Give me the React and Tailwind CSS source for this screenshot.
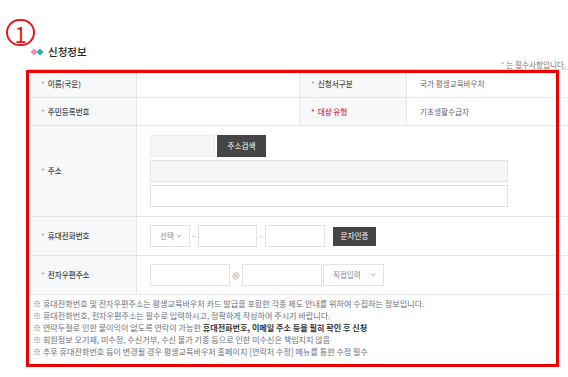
import { ChevronDown } from 'lucide-react'

const font = { fontFamily: '"Noto Sans CJK KR", "Noto Sans", sans-serif' }

function Label({ children, red }) {
  return (
    <div
      className={`flex w-[107px] shrink-0 items-center whitespace-nowrap border-r border-[#e6e6e6] bg-[#f7f8fa] pl-[11px] text-[7.6px] font-medium ${
        red ? 'text-[#e0302b]' : 'text-[#444]'
      }`}
    >
      <span className={`mr-[3px] ${red ? 'text-[#e0302b]' : 'text-[#aaa]'}`}>*</span>
      {children}
    </div>
  )
}

function Select({ text, className }) {
  return (
    <div
      className={`flex h-[22px] items-center justify-between whitespace-nowrap border border-[#e3e3e3] bg-white pl-[9px] pr-[6px] text-[7.5px] text-[#888] ${className}`}
    >
      <span>{text}</span>
      <ChevronDown size={8} strokeWidth={2} className="shrink-0 text-[#888]" />
    </div>
  )
}

function Input({ className }) {
  return <div className={`h-[22px] border border-[#e3e3e3] bg-white ${className}`} />
}

export default function App() {
  return (
    <div className="relative h-[377px] w-[568px] overflow-hidden bg-white" style={font}>
      <div className="ml-[6px] pt-[19px]">
        <div className="flex h-[27px] w-[29px] items-center justify-center rounded-full border-2 border-[#e3191b] text-[22px] leading-none text-[#e3191b]">
          1
        </div>
      </div>

      <div className="ml-[30px] mt-[-1px] flex h-[13px] items-center">
        <svg width="15" height="8" viewBox="0 0 15 8" className="mr-[3px]">
          <rect x="1.5" y="1.5" width="5" height="5" transform="rotate(45 4 4)" fill="#ec8fb8" />
          <rect x="7.5" y="1.5" width="5" height="5" transform="rotate(45 10 4)" fill="#1fb3b0" />
        </svg>
        <span className="text-[10.5px] font-medium text-[#222]">신청정보</span>
      </div>

      <div className="mr-[2px] mt-[2px] whitespace-nowrap text-right text-[7.6px] leading-[10px] text-[#777]">
        <span className="text-[#aaa]">*</span> 는 필수사항입니다.
      </div>

      <div className="ml-[30px] mt-[-1px] w-[545px] border-t border-[#d8d8d8]">
        <div className="flex h-[28px] border-b border-[#e6e6e6]">
          <Label>이름(국문)</Label>
          <div className="w-[163px] shrink-0 border-r border-[#e6e6e6]" />
          <Label>신청서구분</Label>
          <div className="flex items-center pl-[13px] text-[7.6px] text-[#666]">국가 평생교육바우처</div>
        </div>
        <div className="flex h-[28px] border-b border-[#e6e6e6]">
          <Label>주민등록번호</Label>
          <div className="w-[163px] shrink-0 border-r border-[#e6e6e6]" />
          <Label red>대상 유형</Label>
          <div className="flex items-center pl-[13px] text-[7.6px] text-[#666]">기초생활수급자</div>
        </div>

        <div className="flex h-[91px] border-b border-[#e6e6e6]">
          <Label>주소</Label>
          <div className="flex flex-col gap-[3px] pl-[13px] pt-[9px]">
            <div className="flex items-center gap-[2px]">
              <div className="h-[22px] w-[65px] border border-[#ebebeb] bg-[#f5f6f8]" />
              <div className="flex h-[22px] w-[49px] items-center justify-center bg-[#454545] text-[7.6px] text-white">
                주소검색
              </div>
            </div>
            <div className="h-[22px] w-[358px] border border-[#e3e3e3] bg-[#f5f6f8]" />
            <div className="h-[22px] w-[358px] border border-[#e3e3e3] bg-white" />
          </div>
        </div>

        <div className="flex h-[39px] border-b border-[#e6e6e6]">
          <Label>휴대전화번호</Label>
          <div className="flex items-center pl-[13px] text-[7.5px] text-[#888]">
            <Select text="선택" className="w-[40px]" />
            <span className="w-[8px] text-center">-</span>
            <Input className="w-[59px]" />
            <span className="w-[8px] text-center">-</span>
            <Input className="w-[60px]" />
            <div className="ml-[8px] flex h-[19px] w-[43px] items-center justify-center bg-[#454545] text-[7.6px] text-white">
              문자인증
            </div>
          </div>
        </div>

        <div className="flex h-[39px] border-b border-[#e6e6e6]">
          <Label>전자우편주소</Label>
          <div className="flex items-center pl-[13px] text-[7.5px] text-[#999]">
            <Input className="w-[80px]" />
            <span className="w-[12px] text-center">@</span>
            <Input className="w-[80px]" />
            <Select text="직접입력" className="ml-[1px] w-[61px]" />
          </div>
        </div>

        <div className="whitespace-nowrap pl-[3px] pt-[3px] text-[8.1px] leading-[12px] text-[#6b6f78]">
          <p>※ 휴대전화번호 및 전자우편주소는 평생교육바우처 카드 발급을 포함한 각종 제도 안내를 위하여 수집하는 정보입니다.</p>
          <p>※ 휴대전화번호, 전자우편주소는 필수로 입력하시고, 정확하게 작성하여 주시기 바랍니다.</p>
          <p>
            ※ 연락두절로 인한 불이익이 없도록 연락이 가능한{' '}
            <b className="font-bold text-[#333]">휴대전화번호, 이메일 주소 등을 필히 확인 후 신청</b>
          </p>
          <p>※ 회원정보 오기재, 미수정, 수신거부, 수신 불가 기종 등으로 인한 미수신은 책임지지 않음</p>
          <p>※ 추후 휴대전화번호 등이 변경될 경우 평생교육바우처 홈페이지 [연락처 수정] 메뉴를 통한 수정 필수</p>
        </div>
      </div>

      <div className="pointer-events-none absolute left-[26px] top-[70px] h-[297px] w-[533px] border-[3px] border-[#f00000]" />
    </div>
  )
}
